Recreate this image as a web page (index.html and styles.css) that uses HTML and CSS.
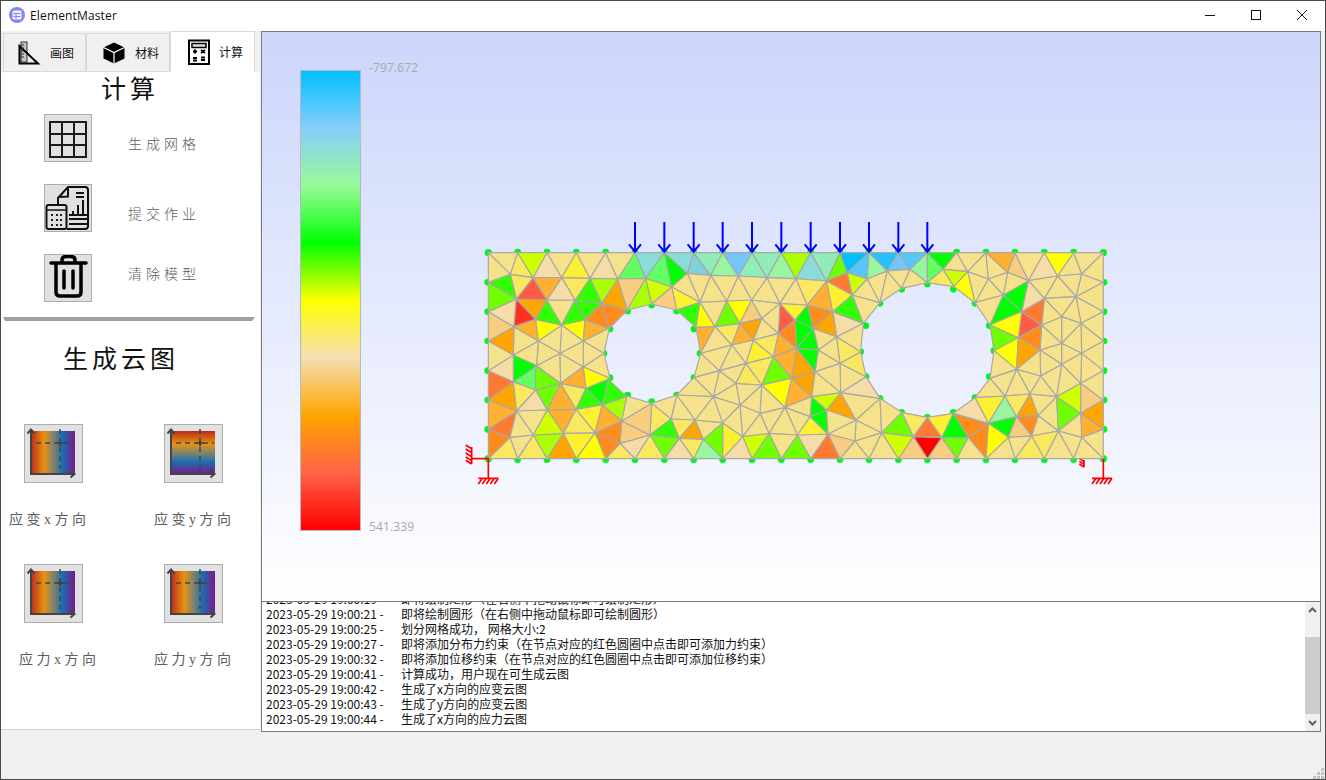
FILE: index.html
```html
<!DOCTYPE html>
<html lang="zh">
<head>
<meta charset="utf-8">
<title>ElementMaster</title>
<link rel="stylesheet" href="styles.css">
</head>
<body>
<svg class="defs" width="0" height="0" aria-hidden="true">
  <defs>
    <linearGradient id="gx" x1="0" y1="0" x2="1" y2="0">
      <stop offset="0" stop-color="#b82d1c"/><stop offset=".3" stop-color="#e8920f"/><stop offset=".5" stop-color="#85846a"/><stop offset=".72" stop-color="#1a6db0"/><stop offset="1" stop-color="#7a1a8c"/>
    </linearGradient>
    <linearGradient id="gy" x1="0" y1="0" x2="0" y2="1">
      <stop offset="0" stop-color="#b82d1c"/><stop offset=".3" stop-color="#e8920f"/><stop offset=".5" stop-color="#85846a"/><stop offset=".72" stop-color="#1a6db0"/><stop offset="1" stop-color="#7a1a8c"/>
    </linearGradient>
    <g id="axes">
      <path class="ax" d="M6 5V49H49M2.500 8.500L6 4.500L9.500 8.500M45.500 45.500L49.500 49L45.500 52.500"/>
      <path class="axd" d="M11 18H49M35 4V44"/>
      <path class="ax" d="M32 18H38M35 15V21"/>
    </g>
  </defs>
</svg>
<div class="app">
  <header class="title">
    <svg class="appicon" width="18" height="18" viewBox="0 0 18 18"><circle class="ai-bg" cx="9" cy="9" r="8"/><rect class="ai-fg" x="4.500" y="4.500" width="9" height="9" rx="1.500"/><path class="ai-ln" d="M5.500 7.500H12.500M8 7.500V13M5.500 10.500H12.500"/></svg>
    <span class="title-text">ElementMaster</span>
    <div class="winbtns">
      <svg width="46" height="30" viewBox="0 0 46 30"><path class="wb" d="M18 14.500H28"/></svg>
      <svg width="46" height="30" viewBox="0 0 46 30"><rect class="wb" x="18.500" y="9.500" width="9" height="9"/></svg>
      <svg width="46" height="30" viewBox="0 0 46 30"><path class="wb" d="M18 9L28 19M28 9L18 19"/></svg>
    </div>
  </header>
  <div class="main">
    <aside class="side">
      <nav class="tabs">
        <div class="tab">
          <svg width="24" height="24" viewBox="0 0 24 24"><rect class="ic-ruler" x="4" y="1" width="6" height="20"/><path class="ic-line" d="M2.500 5V22.500H21L2.500 5Z"/><path class="ic-tick" d="M4 4H7M4 7H7M4 10H7M4 13H7M4 16H7"/></svg>
          <span>画图</span>
        </div>
        <div class="tab tab-mid">
          <svg width="24" height="24" viewBox="0 0 24 24"><path class="ic-fill" d="M12 1.500L22.500 6.500V17.500L12 22.500L1.500 17.500V6.500Z"/><path class="ic-wht" d="M1.500 6.500L12 11.500L22.500 6.500M12 11.500V22.500"/></svg>
          <span>材料</span>
        </div>
        <div class="tab active">
          <svg width="24" height="26" viewBox="0 0 24 26"><rect class="ic-calc" x="2" y="1.500" width="20" height="23.500"/><rect class="ic-disp" x="5" y="4.500" width="14" height="4"/><path class="ic-line" d="M6 12.500H10M8 10.500V14.500M14 11L18 14M18 11L14 14M6 19H10M6 21.500H10M14 18.500H18M14 21H18"/></svg>
          <span>计算</span>
        </div>
      </nav>
      <div class="side-body">
        <h1 class="h-calc">计算</h1>
        <div class="tools">
          <div class="tool">
            <button class="ibtn" type="button"><svg width="46" height="46" viewBox="0 0 46 46"><path class="grid" d="M5 7H41V42H5ZM17 7V42M29 7V42M5 19H41M5 30H41"/></svg></button>
            <span class="tool-label low">生成网格</span>
          </div>
          <div class="tool">
            <button class="ibtn" type="button"><svg width="46" height="46" viewBox="0 0 46 46"><path class="doc" d="M13 20V13L23 2H40Q43 2 43 5V41Q43 44 40 44H22M23 2V11.500L14 12M31 8H39M31 12H39M24 30H42M24 34H42M24 39H42M28 30V26M33 30V20M38 30V15"/><rect class="doc" x="1.500" y="20" width="20" height="24" rx="2"/><path class="doc-s" d="M2 25H21"/><path class="dots" d="M6 30H8M11 30H13M15 30H17M6 35H8M11 35H13M15 35H17M6 40H8M11 40H13M15 40H17"/></svg></button>
            <span class="tool-label low">提交作业</span>
          </div>
          <div class="tool">
            <button class="ibtn" type="button"><svg width="46" height="46" viewBox="0 0 46 46"><path class="trash" d="M6 8H41M11 8V37Q11 41 15 41H32Q36 41 36 37V8M17 8V5Q17 1.500 21 1.500H26Q30 1.500 30 5V8M19 16V33M28 16V33"/></svg></button>
            <span class="tool-label high">清除模型</span>
          </div>
        </div>
        <div class="sep"></div>
        <h2 class="h-cloud">生成云图</h2>
        <div class="clouds">
          <div class="cloud">
            <button class="gbtn" type="button"><svg width="57" height="57" viewBox="0 0 57 57"><rect x="6" y="6" width="44" height="43" fill="url(#gx)"/><use href="#axes"/></svg></button>
            <span class="cloud-label l8">应变x方向</span>
          </div>
          <div class="cloud">
            <button class="gbtn" type="button"><svg width="57" height="57" viewBox="0 0 57 57"><rect x="6" y="6" width="44" height="43" fill="url(#gy)"/><use href="#axes"/></svg></button>
            <span class="cloud-label l13">应变y方向</span>
          </div>
          <div class="cloud">
            <button class="gbtn" type="button"><svg width="57" height="57" viewBox="0 0 57 57"><rect x="6" y="6" width="44" height="43" fill="url(#gx)"/><use href="#axes"/></svg></button>
            <span class="cloud-label l18">应力x方向</span>
          </div>
          <div class="cloud">
            <button class="gbtn" type="button"><svg width="57" height="57" viewBox="0 0 57 57"><rect x="6" y="6" width="44" height="43" fill="url(#gx)"/><use href="#axes"/></svg></button>
            <span class="cloud-label l13">应力y方向</span>
          </div>
        </div>
      </div>
    </aside>
    <div class="right">
      <section class="canvas">
        <div class="legend"></div>
        <div class="legend-labels"><span>-797.672</span><span>541.339</span></div>
        <svg class="scene" width="1058" height="568" viewBox="0 0 1058 568">
          <g transform="translate(208 178) scale(.33333)">
            <path class="sup" d="M5 711V762M5 716l-18 -11M5 728l-18 -11M5 740l-18 -11M5 752l-18 -11M5 762l-18 -11M1842 750V772M1842 755l-14 -9M1842 763l-14 -9M1842 771l-14 -9"/>
            <g class="dots-g">
              <circle cx="55" cy="128" r="11"/><circle cx="143" cy="126" r="10"/><circle cx="231" cy="126" r="10"/><circle cx="319" cy="126" r="10"/><circle cx="407" cy="126" r="10"/><circle cx="495" cy="126" r="10"/><circle cx="583" cy="126" r="10"/><circle cx="671" cy="126" r="10"/><circle cx="758" cy="126" r="10"/><circle cx="846" cy="126" r="10"/><circle cx="934" cy="126" r="10"/><circle cx="1022" cy="126" r="10"/><circle cx="1110" cy="126" r="10"/><circle cx="1197" cy="126" r="10"/><circle cx="1285" cy="126" r="10"/><circle cx="1372" cy="126" r="10"/><circle cx="1460" cy="126" r="10"/><circle cx="1548" cy="126" r="10"/><circle cx="1635" cy="126" r="10"/><circle cx="1723" cy="126" r="10"/><circle cx="1811" cy="126" r="10"/><circle cx="1900" cy="128" r="11"/>
              <circle cx="55" cy="746" r="11"/><circle cx="143" cy="749" r="10"/><circle cx="231" cy="749" r="10"/><circle cx="319" cy="749" r="10"/><circle cx="407" cy="749" r="10"/><circle cx="495" cy="749" r="10"/><circle cx="583" cy="749" r="10"/><circle cx="671" cy="749" r="10"/><circle cx="758" cy="749" r="10"/><circle cx="846" cy="749" r="10"/><circle cx="934" cy="749" r="10"/><circle cx="1022" cy="749" r="10"/><circle cx="1110" cy="749" r="10"/><circle cx="1197" cy="749" r="10"/><circle cx="1285" cy="749" r="10"/><circle cx="1372" cy="749" r="10"/><circle cx="1460" cy="749" r="10"/><circle cx="1548" cy="749" r="10"/><circle cx="1635" cy="749" r="10"/><circle cx="1723" cy="749" r="10"/><circle cx="1811" cy="749" r="10"/><circle cx="1900" cy="746" r="11"/>
              <circle cx="53" cy="217" r="10"/><circle cx="53" cy="305" r="10"/><circle cx="53" cy="393" r="10"/><circle cx="53" cy="482" r="10"/><circle cx="53" cy="570" r="10"/><circle cx="53" cy="658" r="10"/>
              <circle cx="1902" cy="217" r="10"/><circle cx="1902" cy="305" r="10"/><circle cx="1902" cy="393" r="10"/><circle cx="1902" cy="482" r="10"/><circle cx="1902" cy="570" r="10"/><circle cx="1902" cy="658" r="10"/>
              <circle cx="402" cy="430" r="10"/><circle cx="420" cy="357" r="10"/><circle cx="473" cy="303" r="10"/><circle cx="545" cy="285" r="10"/><circle cx="620" cy="303" r="10"/><circle cx="672" cy="357" r="10"/><circle cx="690" cy="430" r="10"/><circle cx="672" cy="503" r="10"/><circle cx="620" cy="555" r="10"/><circle cx="545" cy="575" r="10"/><circle cx="473" cy="555" r="10"/><circle cx="420" cy="503" r="10"/>
              <circle cx="1172" cy="425" r="10"/><circle cx="1187" cy="347" r="10"/><circle cx="1230" cy="280" r="10"/><circle cx="1295" cy="238" r="10"/><circle cx="1372" cy="222" r="10"/><circle cx="1450" cy="238" r="10"/><circle cx="1515" cy="280" r="10"/><circle cx="1558" cy="347" r="10"/><circle cx="1572" cy="422" r="10"/><circle cx="1558" cy="500" r="10"/><circle cx="1515" cy="563" r="10"/><circle cx="1450" cy="607" r="10"/><circle cx="1372" cy="622" r="10"/><circle cx="1295" cy="607" r="10"/><circle cx="1230" cy="565" r="10"/><circle cx="1188" cy="500" r="10"/>
            </g>
            <g class="mesh">
              <polygon points="55,128 143,128 121,193"/>
              <polygon class="y3" points="143,128 121,193 189,203"/>
              <polygon class="l3" points="143,128 231,128 189,203"/>
              <polygon class="tan" points="231,128 189,203 275,203"/>
              <polygon points="231,128 319,128 275,203"/>
              <polygon class="y2" points="319,128 275,203 360,205"/>
              <polygon points="319,128 407,128 360,205"/>
              <polygon class="tan" points="407,128 360,205 443,207"/>
              <polygon points="407,128 495,128 443,207"/>
              <polygon class="lg" points="495,128 443,207 527,205"/>
              <polygon class="teal" points="495,128 583,128 527,205"/>
              <polygon class="lg" points="583,128 527,205 605,231"/>
              <polygon class="g" points="583,128 605,231 652,190"/>
              <polygon class="teal" points="583,128 671,128 652,190"/>
              <polygon class="b4" points="671,128 652,190 722,196"/>
              <polygon class="mint" points="671,128 758,128 722,196"/>
              <polygon class="pale" points="758,128 722,196 805,198"/>
              <polygon class="b3" points="758,128 846,128 805,198"/>
              <polygon class="mint" points="846,128 805,198 891,203"/>
              <polygon class="mint" points="846,128 934,128 891,203"/>
              <polygon class="pale" points="934,128 891,203 978,206"/>
              <polygon class="l2" points="934,128 1022,128 978,206"/>
              <polygon class="teal" points="1022,128 978,206 1070,213"/>
              <polygon class="mint" points="1022,128 1110,128 1070,213"/>
              <polygon class="l1" points="1110,128 1070,213 1132,188"/>
              <polygon class="sky" points="1110,128 1197,128 1132,188"/>
              <polygon class="b2" points="1197,128 1132,188 1192,207"/>
              <polygon class="pale" points="1197,128 1192,207 1252,183"/>
              <polygon class="b1" points="1197,128 1285,128 1252,183"/>
              <polygon class="b3" points="1285,128 1252,183 1320,178"/>
              <polygon class="b2" points="1285,128 1372,128 1320,178"/>
              <polygon class="pale" points="1372,128 1320,178 1372,218"/>
              <polygon class="lg" points="1372,128 1372,218 1420,178"/>
              <polygon class="g" points="1372,128 1460,128 1420,178"/>
              <polygon points="1460,128 1420,178 1493,185"/>
              <polygon points="1460,128 1548,128 1493,185"/>
              <polygon points="1548,128 1493,185 1555,207"/>
              <polygon points="1548,128 1555,207 1613,187"/>
              <polygon class="o1" points="1548,128 1635,128 1613,187"/>
              <polygon class="tn2" points="1635,128 1613,187 1675,212"/>
              <polygon points="1635,128 1723,128 1675,212"/>
              <polygon class="tan" points="1723,128 1675,212 1763,198"/>
              <polygon class="yl" points="1723,128 1811,128 1763,198"/>
              <polygon points="1811,128 1763,198 1835,192"/>
              <polygon points="1811,128 1900,128 1835,192"/>
              <polygon points="1900,128 1835,192 1900,217"/>
              <polygon points="1835,192 1900,217 1818,260"/>
              <polygon points="1763,198 1835,192 1818,260"/>
              <polygon points="1763,198 1723,265 1818,260"/>
              <polygon points="1675,212 1723,265 1763,198"/>
              <polygon points="1818,260 1900,217 1900,305"/>
              <polygon points="1818,260 1900,305 1833,340"/>
              <polygon points="1723,265 1818,260 1775,320"/>
              <polygon points="1818,260 1833,340 1775,320"/>
              <polygon points="1775,320 1833,340 1775,400"/>
              <polygon points="1833,340 1900,305 1900,393"/>
              <polygon points="1833,340 1900,393 1835,430"/>
              <polygon points="1775,400 1833,340 1835,430"/>
              <polygon points="1835,430 1900,393 1900,482"/>
              <polygon points="1835,430 1900,482 1832,520"/>
              <polygon points="1775,400 1835,430 1775,463"/>
              <polygon points="1835,430 1775,463 1832,520"/>
              <polygon points="1775,463 1760,560 1832,520"/>
              <polygon points="1775,463 1712,498 1760,560"/>
              <polygon points="1710,420 1775,400 1775,463"/>
              <polygon points="1710,420 1775,463 1712,498"/>
              <polygon points="1715,345 1775,320 1775,400"/>
              <polygon points="1715,345 1775,400 1710,420"/>
              <polygon points="1723,265 1775,320 1715,345"/>
              <polygon class="o4" points="1655,305 1723,265 1715,345"/>
              <polygon class="r1" points="1655,305 1715,345 1645,383"/>
              <polygon class="o3" points="1645,383 1715,345 1710,420"/>
              <polygon class="tan" points="1675,212 1723,265 1655,305"/>
              <polygon class="g" points="1600,255 1675,212 1655,305"/>
              <polygon points="1613,187 1600,255 1675,212"/>
              <polygon points="1555,207 1600,255 1613,187"/>
              <polygon points="1555,207 1515,278 1600,255"/>
              <polygon points="1493,185 1555,207 1515,278"/>
              <polygon points="1515,278 1600,255 1560,345"/>
              <polygon class="g" points="1600,255 1655,305 1560,345"/>
              <polygon class="yl" points="1560,345 1655,305 1645,383"/>
              <polygon class="l1" points="1560,345 1645,383 1572,422"/>
              <polygon class="yl" points="1572,422 1645,383 1640,478"/>
              <polygon class="o2" points="1645,383 1710,420 1640,478"/>
              <polygon points="1640,478 1710,420 1712,498"/>
              <polygon points="1572,422 1640,478 1560,505"/>
              <polygon points="1640,478 1712,498 1680,552"/>
              <polygon points="1712,498 1760,560 1680,552"/>
              <polygon points="1640,478 1605,558 1680,552"/>
              <polygon points="1560,505 1640,478 1605,558"/>
              <polygon points="1560,505 1515,563 1605,558"/>
              <polygon class="y3" points="1420,178 1372,218 1452,230"/>
              <polygon class="l3" points="1420,178 1493,185 1452,230"/>
              <polygon class="yl" points="1493,185 1452,230 1515,278"/>
              <polygon class="y2" points="1515,563 1605,558 1555,640"/>
              <polygon class="pale" points="1605,558 1555,640 1640,620"/>
              <polygon class="g" points="1555,640 1640,620 1615,682"/>
              <polygon class="y3" points="1605,558 1680,552 1640,620"/>
              <polygon class="o2" points="1680,552 1640,620 1705,617"/>
              <polygon class="o3" points="1640,620 1705,617 1685,678"/>
              <polygon class="tn2" points="1640,620 1615,682 1685,678"/>
              <polygon points="1680,552 1760,560 1705,617"/>
              <polygon points="1760,560 1705,617 1765,663"/>
              <polygon points="1705,617 1685,678 1765,663"/>
              <polygon class="l1" points="1760,560 1832,610 1765,663"/>
              <polygon class="l3" points="1832,520 1760,560 1832,610"/>
              <polygon class="tn2" points="1832,520 1900,570 1832,610"/>
              <polygon points="1900,482 1832,520 1900,570"/>
              <polygon class="o2" points="1832,610 1900,570 1900,658"/>
              <polygon class="o1" points="1832,610 1900,658 1835,682"/>
              <polygon points="1765,663 1832,610 1835,682"/>
              <polygon points="1835,682 1900,658 1900,746"/>
              <polygon points="1835,682 1900,746 1811,746"/>
              <polygon points="1765,663 1835,682 1811,746"/>
              <polygon points="1765,663 1811,746 1723,746"/>
              <polygon class="y3" points="1685,678 1765,663 1723,746"/>
              <polygon class="y3" points="1685,678 1723,746 1635,746"/>
              <polygon points="1615,682 1685,678 1635,746"/>
              <polygon points="1615,682 1635,746 1548,746"/>
              <polygon class="yl" points="1555,640 1615,682 1548,746"/>
              <polygon class="o3" points="1495,682 1555,640 1548,746"/>
              <polygon points="1495,682 1460,746 1548,746"/>
              <polygon class="o3" points="1450,610 1555,640 1495,682"/>
              <polygon class="tan" points="1450,610 1515,563 1555,640"/>
              <polygon class="g" points="1415,683 1450,610 1495,682"/>
              <polygon class="l1" points="1415,683 1495,682 1460,746"/>
              <polygon class="tn2" points="1372,746 1415,683 1460,746"/>
              <polygon class="y2" points="1372,622 1450,610 1415,683"/>
              <polygon class="o4" points="1372,622 1330,680 1415,683"/>
              <polygon class="r" points="1330,680 1415,683 1372,746"/>
              <polygon class="tn2" points="1330,680 1372,746 1285,746"/>
              <polygon class="y3" points="1295,607 1372,622 1330,680"/>
              <polygon class="l1" points="1295,607 1235,668 1330,680"/>
              <polygon class="l3" points="1235,668 1330,680 1285,746"/>
              <polygon points="1235,668 1285,746 1197,746"/>
              <polygon points="1155,693 1235,668 1197,746"/>
              <polygon points="1155,693 1197,746 1110,746"/>
              <polygon points="1158,630 1235,668 1155,693"/>
              <polygon points="1074,672 1158,630 1155,693"/>
              <polygon class="tn2" points="1074,672 1155,693 1110,746"/>
              <polygon class="o4" points="1074,672 1110,746 1022,746"/>
              <polygon class="tan" points="982,675 1074,672 1022,746"/>
              <polygon class="l1" points="934,746 982,675 1022,746"/>
              <polygon class="y2" points="1020,620 1074,672 982,675"/>
              <polygon class="g" points="1020,620 1070,600 1074,672"/>
              <polygon class="g" points="1025,560 1070,600 1020,620"/>
              <polygon class="l3" points="1025,560 1112,548 1070,600"/>
              <polygon class="o2" points="1070,600 1112,548 1158,630"/>
              <polygon points="1070,600 1158,630 1074,672"/>
              <polygon points="1112,548 1230,565 1158,630"/>
              <polygon points="1158,630 1230,565 1235,668"/>
              <polygon points="1230,565 1295,607 1235,668"/>
              <polygon class="tan" points="1112,548 1188,500 1230,565"/>
              <polygon points="1110,460 1188,500 1112,548"/>
              <polygon class="y3" points="1110,460 1172,425 1188,500"/>
              <polygon points="1035,485 1110,460 1112,548"/>
              <polygon points="1035,485 1112,548 1025,560"/>
              <polygon points="1045,420 1110,460 1035,485"/>
              <polygon points="1045,420 1100,380 1110,460"/>
              <polygon class="y3" points="1100,380 1172,425 1110,460"/>
              <polygon points="1100,380 1180,340 1172,425"/>
              <polygon class="tan" points="1088,305 1180,340 1100,380"/>
              <polygon points="1030,355 1100,380 1045,420"/>
              <polygon class="o2" points="1088,305 1100,380 1030,355"/>
              <polygon class="o3" points="1012,285 1088,305 1030,355"/>
              <polygon class="g" points="975,330 1012,285 1030,355"/>
              <polygon class="g" points="975,330 1030,355 980,415"/>
              <polygon class="g" points="980,415 1030,355 1045,420"/>
              <polygon class="g" points="980,415 1045,420 1035,485"/>
              <polygon class="o2" points="980,415 1035,485 965,505"/>
              <polygon class="o1" points="925,370 980,415 910,440"/>
              <polygon class="o1" points="980,415 910,440 965,505"/>
              <polygon class="o3" points="975,330 980,415 925,370"/>
              <polygon class="r1" points="930,280 975,330 925,370"/>
              <polygon class="y2" points="930,280 1012,285 975,330"/>
              <polygon class="l1" points="910,440 965,505 875,525"/>
              <polygon class="yl" points="875,525 965,505 945,592"/>
              <polygon class="o1" points="965,505 1025,560 945,592"/>
              <polygon class="o2" points="965,505 1035,485 1025,560"/>
              <polygon points="945,592 1025,560 1020,620"/>
              <polygon points="945,592 1020,620 982,675"/>
              <polygon points="897,670 945,592 982,675"/>
              <polygon points="870,610 945,592 897,670"/>
              <polygon points="875,525 945,592 870,610"/>
              <polygon points="875,525 870,610 810,585"/>
              <polygon points="798,520 875,525 810,585"/>
              <polygon points="897,670 934,746 982,675"/>
              <polygon class="l1" points="846,746 897,670 934,746"/>
              <polygon class="l3" points="818,680 897,670 846,746"/>
              <polygon points="818,680 870,610 897,670"/>
              <polygon points="810,585 870,610 818,680"/>
              <polygon class="tan" points="758,746 818,680 846,746"/>
              <polygon class="y2" points="758,638 818,680 758,746"/>
              <polygon points="758,638 810,585 818,680"/>
              <polygon class="l1" points="700,688 758,638 758,746"/>
              <polygon class="pale" points="671,746 700,688 758,746"/>
              <polygon points="675,630 758,638 700,688"/>
              <polygon points="675,630 730,560 758,638"/>
              <polygon points="730,560 810,585 758,638"/>
              <polygon points="730,560 798,520 810,585"/>
              <polygon points="748,482 798,520 730,560"/>
              <polygon points="748,482 828,460 798,520"/>
              <polygon class="y3" points="828,460 875,525 798,520"/>
              <polygon class="y3" points="828,460 910,440 875,525"/>
              <polygon class="y2" points="850,390 910,440 828,460"/>
              <polygon class="y3" points="850,390 925,370 910,440"/>
              <polygon points="785,405 850,390 828,460"/>
              <polygon points="785,405 828,460 748,482"/>
              <polygon points="875,325 925,370 850,390"/>
              <polygon points="930,280 925,370 875,325"/>
              <polygon class="o2" points="810,340 875,325 850,390"/>
              <polygon class="o1" points="810,340 850,390 785,405"/>
              <polygon class="y3" points="735,350 810,340 785,405"/>
              <polygon class="l1" points="770,273 735,350 810,340"/>
              <polygon class="yl" points="770,273 845,270 810,340"/>
              <polygon class="tn2" points="845,270 810,340 875,325"/>
              <polygon points="845,270 930,280 875,325"/>
              <polygon points="891,203 845,270 930,280"/>
              <polygon points="891,203 978,206 930,280"/>
              <polygon points="978,206 930,280 1012,285"/>
              <polygon class="y3" points="978,206 1070,213 1012,285"/>
              <polygon class="o1" points="1012,285 1070,213 1088,305"/>
              <polygon class="y2" points="1070,213 1147,255 1088,305"/>
              <polygon class="o4" points="1070,213 1132,188 1147,255"/>
              <polygon class="l3" points="1132,188 1192,207 1147,255"/>
              <polygon class="g2" points="1088,305 1147,255 1180,340"/>
              <polygon points="1147,255 1230,278 1180,340"/>
              <polygon points="1192,207 1230,278 1147,255"/>
              <polygon points="1192,207 1252,183 1230,278"/>
              <polygon points="1252,183 1295,235 1230,278"/>
              <polygon points="1252,183 1320,178 1295,235"/>
              <polygon points="1320,178 1372,218 1295,235"/>
              <polygon points="805,198 845,270 770,273"/>
              <polygon points="805,198 891,203 845,270"/>
              <polygon points="722,196 805,198 770,273"/>
              <polygon points="722,196 770,273 690,277"/>
              <polygon points="652,190 722,196 690,277"/>
              <polygon points="605,231 652,190 690,277"/>
              <polygon class="y2" points="605,231 690,277 620,300"/>
              <polygon class="g2" points="620,300 690,277 678,352"/>
              <polygon class="yl" points="690,277 735,350 678,352"/>
              <polygon points="690,277 770,273 735,350"/>
              <polygon class="o1" points="678,352 735,350 692,430"/>
              <polygon points="692,430 735,350 785,405"/>
              <polygon points="692,430 785,405 748,482"/>
              <polygon points="672,503 692,430 748,482"/>
              <polygon points="672,503 748,482 730,560"/>
              <polygon points="620,555 672,503 730,560"/>
              <polygon points="620,555 730,560 675,630"/>
              <polygon points="603,627 620,555 675,630"/>
              <polygon points="545,580 620,555 603,627"/>
              <polygon class="y3" points="545,580 603,627 540,675"/>
              <polygon class="y3" points="603,627 675,630 628,685"/>
              <polygon class="o2" points="628,685 675,630 700,688"/>
              <polygon class="y3" points="628,685 700,688 671,746"/>
              <polygon class="tan" points="583,746 628,685 671,746"/>
              <polygon class="g2" points="540,675 603,627 628,685"/>
              <polygon class="l1" points="540,675 628,685 583,746"/>
              <polygon class="y3" points="495,746 540,675 583,746"/>
              <polygon class="tan" points="450,700 540,675 495,746"/>
              <polygon class="tn2" points="455,633 540,675 450,700"/>
              <polygon class="tn2" points="545,580 540,675 455,633"/>
              <polygon points="470,558 545,580 455,633"/>
              <polygon class="y3" points="450,700 495,746 407,746"/>
              <polygon class="o3" points="375,668 455,633 450,700"/>
              <polygon class="o3" points="407,746 375,668 450,700"/>
              <polygon class="yl" points="375,668 407,746 319,746"/>
              <polygon class="y2" points="280,670 375,668 319,746"/>
              <polygon class="o2" points="231,746 280,670 319,746"/>
              <polygon class="l2" points="190,675 280,670 231,746"/>
              <polygon class="y3" points="190,675 231,746 143,746"/>
              <polygon points="120,682 190,675 143,746"/>
              <polygon class="y3" points="55,746 120,682 143,746"/>
              <polygon class="o3" points="55,658 120,682 55,746"/>
              <polygon class="o4" points="55,658 140,603 120,682"/>
              <polygon class="o1" points="55,570 140,603 55,658"/>
              <polygon class="o2" points="55,570 130,515 140,603"/>
              <polygon class="o4" points="55,482 130,515 55,570"/>
              <polygon class="y3" points="130,515 197,540 140,603"/>
              <polygon class="tan" points="140,603 232,600 197,540"/>
              <polygon class="l1" points="197,540 272,520 232,600"/>
              <polygon class="o1" points="232,600 272,520 318,598"/>
              <polygon class="y3" points="272,520 348,535 318,598"/>
              <polygon class="g2" points="348,535 397,585 318,598"/>
              <polygon class="g" points="348,535 415,508 397,585"/>
              <polygon class="g2" points="415,508 470,560 397,585"/>
              <polygon class="l2" points="397,585 470,560 455,633"/>
              <polygon class="y2" points="318,598 397,585 375,668"/>
              <polygon class="o1" points="397,585 455,633 375,668"/>
              <polygon class="y3" points="318,598 375,668 280,670"/>
              <polygon class="o1" points="232,600 318,598 280,670"/>
              <polygon points="140,603 232,600 190,675"/>
              <polygon class="l3" points="232,600 280,670 190,675"/>
              <polygon points="120,682 140,603 190,675"/>
              <polygon class="lg" points="130,515 197,467 197,540"/>
              <polygon class="l1" points="197,467 272,520 197,540"/>
              <polygon points="270,430 200,467 272,520"/>
              <polygon points="270,430 272,520 340,470"/>
              <polygon class="o1" points="272,520 340,470 348,535"/>
              <polygon class="yl" points="340,470 420,505 348,535"/>
              <polygon points="340,470 402,430 420,505"/>
              <polygon points="340,393 402,430 340,470"/>
              <polygon points="270,430 340,393 340,470"/>
              <polygon points="275,345 340,393 270,430"/>
              <polygon points="275,345 205,393 270,430"/>
              <polygon points="205,393 270,430 200,467"/>
              <polygon points="130,435 205,393 200,467"/>
              <polygon points="132,350 205,393 130,435"/>
              <polygon class="g" points="130,435 200,467 130,515"/>
              <polygon class="tan" points="130,435 130,515 55,482"/>
              <polygon points="55,393 130,435 55,482"/>
              <polygon class="o2" points="55,393 132,350 130,435"/>
              <polygon class="tn2" points="55,305 132,350 55,393"/>
              <polygon class="tan" points="55,305 139,267 132,350"/>
              <polygon class="r2" points="139,267 132,350 197,328"/>
              <polygon class="o2" points="139,267 231,270 197,328"/>
              <polygon class="o1" points="132,350 197,328 205,393"/>
              <polygon class="yl" points="197,328 275,345 205,393"/>
              <polygon class="g2" points="231,270 197,328 275,345"/>
              <polygon points="231,270 315,270 275,345"/>
              <polygon class="g2" points="315,270 275,345 345,330"/>
              <polygon class="g2" points="315,270 395,280 345,330"/>
              <polygon class="yl" points="275,345 345,330 340,393"/>
              <polygon class="o1" points="345,330 418,355 340,393"/>
              <polygon class="o3" points="345,330 395,280 418,355"/>
              <polygon class="o3" points="395,280 472,300 418,355"/>
              <polygon points="340,393 418,355 402,430"/>
              <polygon class="o2" points="443,207 395,280 472,300"/>
              <polygon class="l2" points="360,205 443,207 395,280"/>
              <polygon class="g2" points="360,205 315,270 395,280"/>
              <polygon class="y3" points="275,203 360,205 315,270"/>
              <polygon class="tan" points="275,203 231,270 315,270"/>
              <polygon class="o1" points="189,203 275,203 231,270"/>
              <polygon class="r1" points="189,203 139,267 231,270"/>
              <polygon class="y3" points="121,193 189,203 139,267"/>
              <polygon class="g2" points="55,217 121,193 139,267"/>
              <polygon points="55,217 121,193 55,128"/>
              <polygon class="l1" points="55,217 139,267 55,305"/>
              <polygon class="tn2" points="443,207 527,205 472,300"/>
              <polygon class="l2" points="527,205 472,300 545,282"/>
              <polygon class="l3" points="527,205 605,231 545,282"/>
              <polygon class="tn2" points="605,231 545,282 620,300"/>
            </g>
            <path class="arrows" d="M495 36V125M477 103L495 125L513 103M583 36V125M565 103L583 125L601 103M671 36V125M653 103L671 125L689 103M758 36V125M740 103L758 125L776 103M846 36V125M828 103L846 125L864 103M934 36V125M916 103L934 125L952 103M1022 36V125M1004 103L1022 125L1040 103M1110 36V125M1092 103L1110 125L1128 103M1197 36V125M1179 103L1197 125L1215 103M1285 36V125M1267 103L1285 125L1303 103M1372 36V125M1354 103L1372 125L1390 103"/>
            <path class="sup" d="M5 746H55V805M25 805H85M37 805l-12 17M49 805l-12 17M61 805l-12 17M73 805l-12 17M85 805l-12 17M1900 746V805M1866 805H1926M1878 805l-12 17M1890 805l-12 17M1902 805l-12 17M1914 805l-12 17M1926 805l-12 17"/>
          </g>
        </svg>
      </section>
      <section class="log">
        <div class="log-lines">
          <div class="line"><span class="ts">2023-05-29 19:00:19 - </span>即将绘制矩形（在右侧中拖动鼠标即可绘制矩形）</div>
          <div class="line"><span class="ts">2023-05-29 19:00:21 - </span>即将绘制圆形（在右侧中拖动鼠标即可绘制圆形）</div>
          <div class="line"><span class="ts">2023-05-29 19:00:25 - </span>划分网格成功， 网格大小:2</div>
          <div class="line"><span class="ts">2023-05-29 19:00:27 - </span>即将添加分布力约束（在节点对应的红色圆圈中点击即可添加力约束）</div>
          <div class="line"><span class="ts">2023-05-29 19:00:32 - </span>即将添加位移约束（在节点对应的红色圆圈中点击即可添加位移约束）</div>
          <div class="line"><span class="ts">2023-05-29 19:00:41 - </span>计算成功，用户现在可生成云图</div>
          <div class="line"><span class="ts">2023-05-29 19:00:42 - </span>生成了x方向的应变云图</div>
          <div class="line"><span class="ts">2023-05-29 19:00:43 - </span>生成了y方向的应变云图</div>
          <div class="line"><span class="ts">2023-05-29 19:00:44 - </span>生成了x方向的应力云图</div>
        </div>
        <div class="scrollbar">
          <svg width="15" height="17" viewBox="0 0 15 17"><path class="sb-arrow" d="M4 10L7.500 6.500L11 10"/></svg>
          <div class="sb-track"><div class="sb-thumb"></div></div>
          <svg width="15" height="17" viewBox="0 0 15 17"><path class="sb-arrow" d="M4 7L7.500 10.500L11 7"/></svg>
        </div>
      </section>
    </div>
    <div class="right-gap"></div>
  </div>
  <footer class="status">
    <svg class="grip" width="12" height="12" viewBox="0 0 12 12"><path class="grip-d" d="M8 1h3v3h-3zM4 5h3v3h-3zM8 5h3v3h-3zM0 9h3v3h-3zM4 9h3v3h-3zM8 9h3v3h-3z"/></svg>
  </footer>
</div>
</body>
</html>
```

FILE: styles.css
```css
* { box-sizing: border-box; }
html, body { margin: 0; padding: 0; height: 100%; background: #f0f0f0; overflow: hidden; }
.defs { position: absolute; }
.app { width: 1326px; height: 780px; border: 1px solid #4a4a4a; display: flex; flex-direction: column; background: #f0f0f0; font-family: "Noto Sans CJK SC", sans-serif; }

.title { height: 30px; flex: none; background: #fff; display: flex; align-items: center; padding-left: 7px; }
.appicon { flex: none; margin-bottom: 2px; }
.ai-bg { fill: #8585f2; }
.ai-fg { fill: #f2f2ff; }
.ai-ln { fill: none; stroke: #8585f2; stroke-width: 1; }
.title-text { margin: 0 0 2px 4px; font: 12px "Open Sans", sans-serif; letter-spacing: .15px; color: #111; }
.winbtns { margin-left: auto; display: flex; margin-right: 0; }
.wb { fill: none; stroke: #111; stroke-width: 1; }

.main { height: 702px; flex: none; display: flex; }
.side { width: 260px; flex: none; background: #f0f0f0; display: flex; flex-direction: column; }
.tabs { height: 41px; flex: none; display: flex; padding-left: 2px; align-items: flex-end; }
.tab { width: 83px; height: 39px; background: #f0f0f0; border: 1px solid #d9d9d9; display: flex; align-items: center; padding-left: 13px; gap: 9px; font-size: 12px; color: #111; line-height: 1; }
.tab-mid { width: 84px; padding-left: 15px; }
.tab.active { width: 85px; height: 41px; background: #fff; border-bottom: 0; padding-left: 16px; gap: 8px; }
.tab svg { flex: none; }
.ic-ruler { fill: #c4c4c4; stroke: #333; stroke-width: 1; }
.ic-line { fill: none; stroke: #000; stroke-width: 2; }
.ic-tick { fill: none; stroke: #333; stroke-width: 1; }
.ic-fill { fill: #000; }
.ic-wht { fill: none; stroke: #fff; stroke-width: 1.2; }
.ic-calc { fill: #fff; stroke: #000; stroke-width: 2; }
.ic-disp { fill: #ddd; stroke: #000; stroke-width: 1.500; }

.side-body { width: 259px; height: 658px; flex: none; background: #fff; border-bottom: 1px solid #cfcfcf; }
.h-calc, .h-cloud { margin: 0; font-family: "Liberation Serif", "Noto Sans CJK SC", sans-serif; font-weight: 400; font-size: 25px; letter-spacing: 4px; color: #111; line-height: 36px; }
.h-calc { padding-left: 100px; height: 42px; }
.tools { display: flex; flex-direction: column; gap: 22px; padding-left: 43px; }
.tool { display: flex; align-items: center; gap: 36px; }
.ibtn { width: 48px; height: 48px; padding: 0; background: #e1e1e1; border: 1px solid #adadad; display: block; flex: none; }
.ibtn svg, .gbtn svg { display: block; }
.tool-label { font-size: 14px; letter-spacing: 4px; color: #5c5c5c; font-weight: 300; line-height: 20px; }
.low { margin-top: 10px; }
.high { margin-bottom: 10px; }
.grid { fill: none; stroke: #1a1a1a; stroke-width: 2; }
.doc { fill: none; stroke: #111; stroke-width: 2; }
.doc-s { fill: none; stroke: #111; stroke-width: 1.500; }
.dots { fill: none; stroke: #222; stroke-width: 2; }
.trash { fill: none; stroke: #000; stroke-width: 3.5; stroke-linecap: round; }
.sep { height: 4px; margin: 15px 5px 0 2px; background: #a0a0a0; clip-path: polygon(0 0, 100% 0, calc(100% - 3px) 100%, 2px 100%); }
.h-cloud { padding-left: 62px; margin-top: 21px; height: 34px; }
.clouds { margin-top: 48px; display: grid; grid-template-columns: 140px 118px; row-gap: 30px; }
.cloud { display: flex; flex-direction: column; }
.gbtn { width: 59px; height: 59px; padding: 0; margin-left: 23px; background: #e1e1e1; border: 1px solid #adadad; }
.cloud-label { margin-top: 23px; height: 28px; line-height: 28px; font-family: "Liberation Serif", "Noto Sans CJK SC", sans-serif; font-size: 14px; letter-spacing: 3.5px; color: #5c5c5c; white-space: nowrap; }
.l8 { margin-left: 8px; }
.l13 { margin-left: 13px; }
.l18 { margin-left: 18px; }
.ax { fill: none; stroke: #444; stroke-width: 2; }
.axd { fill: none; stroke: #444; stroke-width: 1.5; stroke-dasharray: 5 4; }

.right { width: 1060px; flex: none; display: flex; flex-direction: column; }
.right-gap { flex: 1; }
.canvas { position: relative; height: 570px; flex: none; border: 1px solid #7a7a7a; border-bottom: 0; background: linear-gradient(#ccd6fb, #ffffff); display: flex; align-items: flex-start; padding: 38px 0 0 38px; }
.legend { width: 61px; height: 461px; flex: none; border: 1px solid #b4b9c6; background: linear-gradient(#00bfff 0%, #87cefa 12.5%, #98fb98 25%, #00ff00 37.5%, #ffff00 50%, #f5deb3 62.5%, #ffa500 75%, #ff6347 87.5%, #ff0000 100%); }
.legend-labels { display: flex; flex-direction: column; justify-content: space-between; height: 473px; margin: -9px 0 0 8px; font: 12px/14px "Open Sans", sans-serif; letter-spacing: .15px; color: #a8a8a8; }
.scene { position: absolute; left: 0; top: 0; overflow: visible; }
.dots-g circle { fill: #00f51e; }
.mesh polygon { fill: #f6e28a; stroke: #a8a8a8; stroke-width: 3.5; stroke-linejoin: round; }
.mesh .sky { fill: #00bfff; } .mesh .b1 { fill: #25c0ff; } .mesh .b2 { fill: #55c8fb; } .mesh .b3 { fill: #72c6fa; } .mesh .b4 { fill: #80d0e0; }
.mesh .teal { fill: #8adcd8; } .mesh .mint { fill: #90ecb8; } .mesh .pale { fill: #98f5a0; } .mesh .lg { fill: #62ff62; }
.mesh .g { fill: #00ff00; } .mesh .g2 { fill: #30ff00; } .mesh .l1 { fill: #70ff00; } .mesh .l2 { fill: #aaff00; } .mesh .l3 { fill: #d0ff00; }
.mesh .yl { fill: #ffff00; } .mesh .y2 { fill: #fdf030; } .mesh .y3 { fill: #f9e860; }
.mesh .tan { fill: #f6dca6; } .mesh .tn2 { fill: #f8cd80; } .mesh .o1 { fill: #ffb030; } .mesh .o2 { fill: #ffa500; } .mesh .o3 { fill: #ff8c1a; } .mesh .o4 { fill: #ff7a30; }
.mesh .r1 { fill: #ff5c45; } .mesh .r2 { fill: #ff3020; } .mesh .r { fill: #ff0000; }
.arrows { fill: none; stroke: #0000ff; stroke-width: 6; }
.sup { fill: none; stroke: #ff0000; stroke-width: 5; }

.log { height: 131px; flex: none; border: 1px solid #7a7a7a; background: #fff; display: flex; }
.log-lines { flex: 1; min-width: 0; overflow: hidden; display: flex; flex-direction: column; justify-content: flex-end; padding: 0 0 5px 4px; font: 12px/15px "Noto Sans CJK SC", sans-serif; color: #111; }
.line { height: 15px; white-space: nowrap; flex: none; }
.ts { display: inline-block; width: 135px; }
.scrollbar { width: 15px; flex: none; background: #f0f0f0; display: flex; flex-direction: column; }
.sb-track { flex: 1; display: flex; flex-direction: column; padding-top: 18px; }
.sb-thumb { height: 77px; background: #cdcdcd; }
.sb-arrow { fill: none; stroke: #606060; stroke-width: 2; }

.status { flex: 1; position: relative; background: #f0f0f0; }
.grip { position: absolute; right: 0; bottom: 0; }
.grip-d { fill: #c4c4c4; }
```
